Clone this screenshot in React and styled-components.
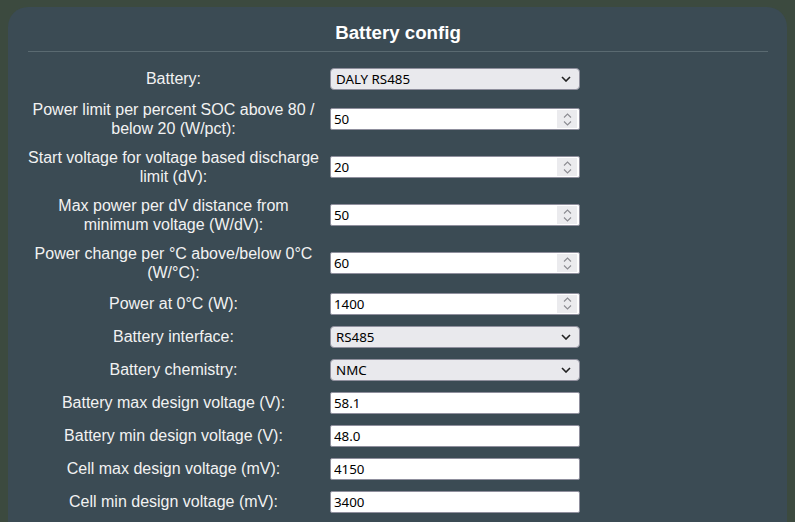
import React from "react";
import styled, { createGlobalStyle } from "styled-components";

const GlobalStyle = createGlobalStyle`
  html, body {
    margin: 0;
    padding: 0;
    background: #3c4a3f;
    height: 100%;
    overflow: hidden;
  }
`;

const Card = styled.div`
  margin: 7px 8px 0 8px;
  padding: 15px 19px 40px 20px;
  background: #3b4b54;
  border-radius: 20px;
  min-height: 560px;
  box-sizing: border-box;
  font-family: "Liberation Sans", Arial, sans-serif;
  color: #f2f2f2;
`;

const Title = styled.h3`
  margin: 0;
  font-size: 18.7px;
  font-weight: bold;
  text-align: center;
  color: #ffffff;
`;

const Rule = styled.hr`
  margin: 7px 0 15px 0;
  border: none;
  border-top: 1px solid #5a6a71;
`;

const Form = styled.div`
  display: grid;
  grid-template-columns: 291px 250px;
  grid-auto-rows: minmax(23px, auto);
  column-gap: 11px;
  row-gap: 10px;
  align-items: center;
`;

const Label = styled.label`
  font-size: 16px;
  line-height: 19px;
  text-align: center;
  color: #f2f2f2;
`;

const Wrap = styled.div`
  position: relative;
  width: 250px;
  height: 22px;
`;

const fieldBase = `
  box-sizing: border-box;
  width: 250px;
  height: 22px;
  margin: 0;
  font-family: "Noto Sans", "Open Sans", sans-serif;
  font-size: 13.33px;
  color: #000;
  outline: none;
`;

const Select = styled.select`
  ${fieldBase}
  appearance: none;
  padding: 0 24px 0 5px;
  background: #e9e9ed;
  border: 1px solid #8f8f9d;
  border-radius: 4px;
`;

const Input = styled.input`
  ${fieldBase}
  appearance: textfield;
  padding: 1px 3px;
  background: #ffffff;
  border: 1px solid #8f8f9d;
  border-radius: 2px;

  &::-webkit-inner-spin-button,
  &::-webkit-outer-spin-button {
    -webkit-appearance: none;
    margin: 0;
  }
`;

const Arrow = styled.svg`
  position: absolute;
  right: 9px;
  top: 8px;
  pointer-events: none;
`;

const Spinner = styled.div`
  position: absolute;
  right: 3px;
  top: 2px;
  width: 20px;
  height: 18px;
  background: #ebebee;
  display: flex;
  flex-direction: column;
  align-items: center;
  justify-content: center;
  gap: 3px;
  pointer-events: none;
`;

const Chevron = ({ up }) => (
  <svg width="9" height="5" viewBox="0 0 9 5">
    <path
      d={up ? "M1 4.5 L4.5 1 L8 4.5" : "M1 0.5 L4.5 4 L8 0.5"}
      fill="none"
      stroke="#8c8c92"
      strokeWidth="1.1"
    />
  </svg>
);

const rows = [
  { label: "Battery:", kind: "select", value: "DALY RS485" },
  { label: "Power limit per percent SOC above 80 / below 20 (W/pct):", kind: "number", value: "50" },
  { label: "Start voltage for voltage based discharge limit (dV):", kind: "number", value: "20" },
  { label: "Max power per dV distance from minimum voltage (W/dV):", kind: "number", value: "50" },
  { label: "Power change per °C above/below 0°C (W/°C):", kind: "number", value: "60" },
  { label: "Power at 0°C (W):", kind: "number", value: "1400" },
  { label: "Battery interface:", kind: "select", value: "RS485" },
  { label: "Battery chemistry:", kind: "select", value: "NMC" },
  { label: "Battery max design voltage (V):", kind: "text", value: "58.1" },
  { label: "Battery min design voltage (V):", kind: "text", value: "48.0" },
  { label: "Cell max design voltage (mV):", kind: "text", value: "4150" },
  { label: "Cell min design voltage (mV):", kind: "text", value: "3400" },
];

const Field = ({ kind, value }) => {
  if (kind === "select") {
    return (
      <Wrap>
        <Select defaultValue={value}>
          <option>{value}</option>
        </Select>
        <Arrow width="10" height="6" viewBox="0 0 10 6">
          <path d="M1 1 L5 5 L9 1" fill="none" stroke="#222" strokeWidth="1.6" />
        </Arrow>
      </Wrap>
    );
  }
  return (
    <Wrap>
      <Input type={kind} defaultValue={value} />
      {kind === "number" && (
        <Spinner>
          <Chevron up />
          <Chevron />
        </Spinner>
      )}
    </Wrap>
  );
};

const App = () => (
  <>
    <GlobalStyle />
    <Card>
      <Title>Battery config</Title>
      <Rule />
      <Form>
        {rows.map((r) => (
          <React.Fragment key={r.label}>
            <Label>{r.label}</Label>
            <Field kind={r.kind} value={r.value} />
          </React.Fragment>
        ))}
      </Form>
    </Card>
  </>
);

export default App;
